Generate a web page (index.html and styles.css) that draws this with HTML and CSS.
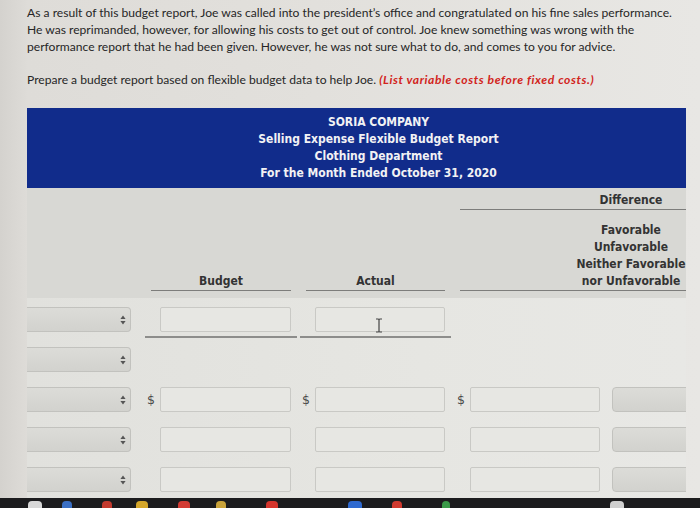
FILE: index.html
```html
<!DOCTYPE html>
<html>
<head>
<meta charset="utf-8">
<link rel="stylesheet" href="styles.css">
</head>
<body>
<div class="page">
  <p class="intro">As a result of this budget report, Joe was called into the president’s office and congratulated on his fine sales performance.<br>He was reprimanded, however, for allowing his costs to get out of control. Joe knew something was wrong with the<br>performance report that he had been given. However, he was not sure what to do, and comes to you for advice.</p>
  <p class="prompt">Prepare a budget report based on flexible budget data to help Joe. <span class="note">(List variable costs before fixed costs.)</span></p>

  <div class="panel">
    <div class="title">
      <div>SORIA COMPANY</div>
      <div>Selling Expense Flexible Budget Report</div>
      <div>Clothing Department</div>
      <div>For the Month Ended October 31, 2020</div>
    </div>

    <div class="colhead">
      <div class="ch ch-budget">Budget</div>
      <div class="ch ch-actual">Actual</div>
      <div class="ch ch-diff">
        <div class="diff-label"><span class="diff-text">Difference</span></div>
        <div class="diff-sub"><span class="diff-text">Favorable<br>Unfavorable<br>Neither Favorable<br>nor Unfavorable</span></div>
      </div>
    </div>

    <div class="rows">
      <div class="row">
        <div class="select c1"><svg class="arrows" width="6" height="10" viewBox="0 0 6 10"><path d="M3 0.5 L5.6 4 H0.4 Z M3 9.5 L5.6 6 H0.4 Z" fill="#555"/></svg></div>
        <div class="total-line tl-b"></div>
        <div class="field c3"></div>
        <div class="total-line tl-a"></div>
        <div class="field c5"><svg class="ibeam" width="8" height="15" viewBox="0 0 8 15"><path d="M1 1 H3 Q4 1.5 5 1 H7 M4 1.5 V13.5 M1 14 H3 Q4 13.5 5 14 H7" stroke="#444" stroke-width="1.2" fill="none"/></svg></div>
      </div>
      <div class="row">
        <div class="select c1"><svg class="arrows" width="6" height="10" viewBox="0 0 6 10"><path d="M3 0.5 L5.6 4 H0.4 Z M3 9.5 L5.6 6 H0.4 Z" fill="#555"/></svg></div>
      </div>
      <div class="row">
        <div class="select c1"><svg class="arrows" width="6" height="10" viewBox="0 0 6 10"><path d="M3 0.5 L5.6 4 H0.4 Z M3 9.5 L5.6 6 H0.4 Z" fill="#555"/></svg></div>
        <div class="dollar c2">$</div>
        <div class="field c3"></div>
        <div class="dollar c4">$</div>
        <div class="field c5"></div>
        <div class="dollar c6">$</div>
        <div class="field c7"></div>
        <div class="select small c9"></div>
      </div>
      <div class="row">
        <div class="select c1"><svg class="arrows" width="6" height="10" viewBox="0 0 6 10"><path d="M3 0.5 L5.6 4 H0.4 Z M3 9.5 L5.6 6 H0.4 Z" fill="#555"/></svg></div>
        <div class="field c3"></div>
        <div class="field c5"></div>
        <div class="field c7"></div>
        <div class="select small c9"></div>
      </div>
      <div class="row last">
        <div class="select c1"><svg class="arrows" width="6" height="10" viewBox="0 0 6 10"><path d="M3 0.5 L5.6 4 H0.4 Z M3 9.5 L5.6 6 H0.4 Z" fill="#555"/></svg></div>
        <div class="field c3"></div>
        <div class="field c5"></div>
        <div class="field c7"></div>
        <div class="select small c9"></div>
      </div>
    </div>
  </div>

  <div class="dock">
    <span class="blob b-white"></span>
    <span class="blob b-blue"></span>
    <span class="blob b-red"></span>
    <span class="blob b-yellow"></span>
    <span class="blob b-red2"></span>
    <span class="blob b-yellow2"></span>
    <span class="blob b-red3"></span>
    <span class="blob b-blue2"></span>
    <span class="blob b-red4"></span>
    <span class="blob b-green"></span>
    <span class="blob b-white2"></span>
  </div>
</div>
</body>
</html>
```

FILE: styles.css
```css
html, body {
  margin: 0;
  padding: 0;
}
body {
  width: 700px;
  height: 508px;
  overflow: hidden;
  background: linear-gradient(to right, #d4d2ce 0, #dedcd8 28px, #e2e0dc 45%, #e8e7e4 100%);
  font-family: Lato, "Open Sans", sans-serif;
  color: #262626;
}
.page {
  display: flex;
  flex-direction: column;
  height: 508px;
}
.intro {
  margin: 0;
  padding: 4px 0 0 27px;
  font-size: 12.1px;
  line-height: 17px;
  white-space: nowrap;
}
.prompt {
  margin: 16px 0 0 27px;
  font-size: 12.1px;
  line-height: 17px;
  white-space: nowrap;
}
.note {
  color: #d2241c;
  font-weight: bold;
  font-style: italic;
  letter-spacing: 0.6px;
}
.panel {
  margin: 20px 0 0 27px;
  width: 659px;
  overflow: hidden;
  background: #e4e4e0;
  font-family: "DejaVu Sans Condensed", "Noto Sans", sans-serif;
  font-stretch: condensed;
}
.title {
  height: 80px;
  box-sizing: border-box;
  padding: 6px 0 0 44px;
  background: #112c8b;
  color: #f2f2f4;
  text-align: center;
  font-weight: bold;
  font-size: 12px;
  line-height: 17px;
}
.colhead, .row {
  display: grid;
  grid-template-columns: 104px 29px 131px 24px 130px 25px 130px 12px 80px;
}
.colhead {
  height: 110px;
  box-sizing: border-box;
  padding: 4px 0 7px;
  background: #d8d8d4;
  align-items: end;
  font-weight: bold;
  font-size: 12px;
  color: #333;
}
.ch {
  text-align: center;
  line-height: 17px;
  border-bottom: 1.5px solid #7d7d7b;
}
.ch-budget {
  grid-column: 2 / 4;
  margin-left: 20px;
}
.ch-actual {
  grid-column: 4 / 6;
  margin-left: 15px;
}
.ch-diff {
  grid-column: 6 / 10;
  margin: 0 6px 0 15px;
  border-bottom: none;
  text-align: right;
}
.diff-label {
  border-bottom: 1.5px solid #7d7d7b;
}
.diff-sub {
  margin-top: 12px;
  border-bottom: 1.5px solid #7d7d7b;
}
.diff-text {
  display: inline-block;
  width: 110px;
  text-align: center;
}
.rows {
  padding-top: 9px;
  background: linear-gradient(to right, #e1e1dd, #e6e6e2 60%, #e8e8e5);
}
.row {
  height: 40px;
  align-items: start;
}
.row.last {
  height: 31px;
}
.select {
  grid-row: 1;
  height: 25px;
  box-sizing: border-box;
  border: 1px solid #c2c2be;
  border-left: none;
  border-radius: 0 4px 4px 0;
  background: linear-gradient(to bottom, #dcdcd8, #d2d2ce);
  display: flex;
  align-items: center;
  justify-content: flex-end;
  padding-right: 4px;
}
.select.small {
  border-left: 1px solid #c2c2be;
  border-radius: 4px;
}
.arrows {
  display: block;
}
.field {
  grid-row: 1;
  position: relative;
  height: 25px;
  box-sizing: border-box;
  border: 1px solid #c9c9c5;
  border-radius: 2px;
  background: #e7e7e3;
}
.dollar {
  grid-row: 1;
  height: 25px;
  line-height: 25px;
  text-align: right;
  padding-right: 5px;
  font-family: "DejaVu Sans", sans-serif;
  font-stretch: normal;
  font-size: 12.5px;
  color: #4a4a4a;
}
.c1 { grid-column: 1; }
.c2 { grid-column: 2; }
.c3 { grid-column: 3; }
.c4 { grid-column: 4; }
.c5 { grid-column: 5; }
.c6 { grid-column: 6; }
.c7 { grid-column: 7; }
.c9 { grid-column: 9; }
.total-line {
  grid-row: 1;
  height: 29px;
  border-bottom: 2px solid #8d8d8b;
}
.tl-b {
  grid-column: 2 / 4;
  margin: 0 -6px 0 14px;
}
.tl-a {
  grid-column: 4 / 6;
  margin: 0 -6px 0 9px;
}
.ibeam {
  position: absolute;
  left: 59px;
  top: 10px;
}
.dock {
  flex: 1;
  background: #1c1c1e;
  display: flex;
  align-items: flex-start;
  overflow: hidden;
}
.blob {
  display: block;
  height: 8px;
  margin-top: 3px;
  border-radius: 4px 4px 0 0;
}
.b-white { width: 14px; margin-left: 28px; background: #d8d8d8; }
.b-blue { width: 10px; margin-left: 20px; background: #3a6fc4; }
.b-red { width: 10px; margin-left: 30px; background: #c23a2e; }
.b-yellow { width: 12px; margin-left: 24px; background: #d4a62a; }
.b-red2 { width: 12px; margin-left: 30px; background: #d23b33; }
.b-yellow2 { width: 10px; margin-left: 26px; background: #c9a33a; }
.b-red3 { width: 12px; margin-left: 40px; background: #d4352c; }
.b-blue2 { width: 14px; margin-left: 70px; background: #2f6ad0; }
.b-red4 { width: 10px; margin-left: 30px; background: #d03a2f; }
.b-green { width: 8px; margin-left: 40px; background: #3a9a48; }
.b-white2 { width: 14px; margin-left: 160px; background: #cfcfcf; }
```
